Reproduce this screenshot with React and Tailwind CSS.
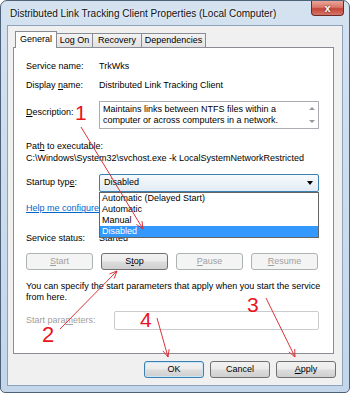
import React from 'react'

const btnBase =
  'h-[17px] rounded-[3px] border flex items-center justify-center leading-none'
const btnOn =
  'border-[#707070] text-black bg-[linear-gradient(#f2f2f2_0%,#ebebeb_48%,#dddddd_52%,#cfcfcf_100%)]'
const btnOff = 'border-[#adb2b5] text-[#a0a0a0] bg-[#f4f4f4]'

function U({ children }) {
  return <span className="underline underline-offset-[1px]">{children}</span>
}

function Arrow({ x1, y1, x2, y2 }) {
  const a = Math.atan2(y2 - y1, x2 - x1)
  const l = 8
  const s = 0.42
  const p1 = `${x2 - l * Math.cos(a - s)},${y2 - l * Math.sin(a - s)}`
  const p2 = `${x2 - l * Math.cos(a + s)},${y2 - l * Math.sin(a + s)}`
  return (
    <g stroke="#d9343a" strokeWidth="1" fill="none">
      <line x1={x1} y1={y1} x2={x2} y2={y2} />
      <polyline points={`${p1} ${x2},${y2} ${p2}`} />
    </g>
  )
}

function Tab({ active, children, w }) {
  if (active) {
    return (
      <div
        className={`${w} h-[17px] bg-white border border-b-0 border-[#898c95] flex items-center justify-center relative z-10`}
      >
        {children}
      </div>
    )
  }
  return (
    <div
      className={`${w} h-[14px] mb-[1px] -ml-[1px] border border-b-0 border-[#898c95] bg-linear-to-b from-[#f3f3f3] to-[#e2e2e2] flex items-center justify-center`}
    >
      {children}
    </div>
  )
}

export default function App() {
  return (
    <div className="w-[350px] h-[395px] bg-white relative font-['Liberation_Sans',Arial,sans-serif] text-[9px] text-black select-none overflow-hidden">
      {/* Window frame */}
      <div className="w-[350px] h-[393px] rounded-t-[7px] rounded-b-[5px] border border-[#4d6178] bg-linear-to-b from-[#d4e2f0] to-[#c3d6ea] flex flex-col">
        {/* Title bar */}
        <div className="h-[24px] flex items-start justify-between">
          <div className="h-[24px] pl-[9px] flex items-center whitespace-nowrap text-[10px] text-[#111] [text-shadow:0_0_3px_#ffffff]">
            Distributed Link Tracking Client Properties (Local Computer)
          </div>
          <div className="mr-[5px] w-[33px] h-[15px] rounded-b-[4px] border border-t-0 border-[#6b2b25] bg-[linear-gradient(#eba598_0%,#d9776a_45%,#c4463a_55%,#d6766a_100%)] flex items-center justify-center">
            <span className="text-white text-[11px] font-bold leading-none [text-shadow:0_0_2px_#5a1a14]">
              x
            </span>
          </div>
        </div>

        {/* Dialog face */}
        <div className="mx-[6px] mb-[6px] flex-1 border border-[#8ea3bb] bg-[#f0f0f0] flex flex-col">
          {/* Tabs */}
          <div className="mt-[5px] ml-[7px] h-[17px] -mb-[1px] flex items-end">
            <Tab active w="w-[42px]">General</Tab>
            <Tab w="w-[37px]">Log On</Tab>
            <Tab w="w-[50px]">Recovery</Tab>
            <Tab w="w-[65px]">Dependencies</Tab>
          </div>

          {/* Panel */}
          <div className="ml-[5px] w-[321px] h-[307px] bg-white border border-[#898c95] pl-[12px] flex flex-col">
            <div className="mt-[12px] h-[14px] flex items-center">
              <div className="w-[73px]">Service name:</div>
              <div>TrkWks</div>
            </div>
            <div className="mt-[5px] h-[14px] flex items-center">
              <div className="w-[73px]">
                Display <U>n</U>ame:
              </div>
              <div>Distributed Link Tracking Client</div>
            </div>
            <div className="mt-[8px] flex">
              <div className="w-[73px] pt-[4px] leading-[14px]">
                <U>D</U>escription:
              </div>
              <div className="w-[220px] h-[28px] border border-[#abadb3] flex">
                <div className="flex-1 pl-[3px] pt-[2px] leading-[11px]">
                  Maintains links between NTFS files within a computer or
                  across computers in a network.
                </div>
                <div className="w-[13px] flex flex-col items-center justify-between py-[5px]">
                  <div className="w-0 h-0 border-l-[3px] border-r-[3px] border-b-[3px] border-l-transparent border-r-transparent border-b-[#9a9a9a]" />
                  <div className="w-0 h-0 border-l-[3px] border-r-[3px] border-t-[3px] border-l-transparent border-r-transparent border-t-[#9a9a9a]" />
                </div>
              </div>
            </div>
            <div className="mt-[11px] h-[12px] leading-[12px]">
              Pat<U>h</U> to executable:
            </div>
            <div className="h-[12px] leading-[12px]">
              C:\Windows\System32\svchost.exe -k LocalSystemNetworkRestricted
            </div>
            <div className="mt-[10px] h-[18px] flex items-center">
              <div className="w-[73px]">
                Startup typ<U>e</U>:
              </div>
              <div className="relative w-[220px] h-[18px]">
                <div className="w-[220px] h-[18px] rounded-[2px] border border-[#3c7fb1] bg-linear-to-b from-[#f6f9fc] to-[#e2ecf5] flex items-center justify-between pl-[4px] pr-[5px]">
                  <span>Disabled</span>
                  <div className="w-0 h-0 border-l-[3.5px] border-r-[3.5px] border-t-[4px] border-l-transparent border-r-transparent border-t-black" />
                </div>
                {/* Open drop-down list */}
                <div className="absolute left-0 top-[18px] w-[220px] border border-[#646464] bg-white z-10 flex flex-col">
                  <div className="h-[11px] pl-[2px] flex items-center">
                    Automatic (Delayed Start)
                  </div>
                  <div className="h-[11px] pl-[2px] flex items-center">
                    Automatic
                  </div>
                  <div className="h-[11px] pl-[2px] flex items-center">
                    Manual
                  </div>
                  <div className="h-[11px] pl-[2px] flex items-center bg-[#3399ff] text-white">
                    Disabled
                  </div>
                </div>
              </div>
            </div>
            <div className="mt-[10px] h-[14px] flex items-center">
              <span className="text-[#0066cc] underline">
                Help me configure service recovery options.
              </span>
            </div>
            <div className="mt-[16px] h-[14px] flex items-center">
              <div className="w-[73px]">Service status:</div>
              <div>Started</div>
            </div>
            <div className="mt-[7px] flex gap-[8px]">
              <div className={`${btnBase} ${btnOff} w-[67px]`}>
                <span>
                  <U>S</U>tart
                </span>
              </div>
              <div className={`${btnBase} ${btnOn} w-[67px]`}>
                <span>
                  S<U>t</U>op
                </span>
              </div>
              <div className={`${btnBase} ${btnOff} w-[67px]`}>
                <span>
                  <U>P</U>ause
                </span>
              </div>
              <div className={`${btnBase} ${btnOff} w-[67px]`}>
                <span>
                  <U>R</U>esume
                </span>
              </div>
            </div>
            <div className="mt-[11px] leading-[11px]">
              You can specify the start parameters that apply when you start the
              service
              <br />
              from here.
            </div>
            <div className="mt-[8px] h-[19px] flex items-center">
              <div className="w-[88px] text-[#a0a0a0]">
                Start para<U>m</U>eters:
              </div>
              <div className="w-[205px] h-[19px] border border-[#c9cccf] rounded-[2px] bg-white" />
            </div>
          </div>

          {/* Dialog buttons */}
          <div className="mt-[7px] pr-[6px] flex justify-end gap-[6px]">
            <div
              className={`${btnBase} w-[60px] border-[#3c7fb1] text-black shadow-[inset_0_0_0_1px_#c7e7f8] bg-[linear-gradient(#f2f2f2_0%,#ebebeb_48%,#dddddd_52%,#cfcfcf_100%)]`}
            >
              OK
            </div>
            <div className={`${btnBase} ${btnOn} w-[60px]`}>Cancel</div>
            <div className={`${btnBase} ${btnOn} w-[60px]`}>
              <span>
                <U>A</U>pply
              </span>
            </div>
          </div>
        </div>
      </div>

      {/* Red annotations */}
      <svg
        className="absolute left-0 top-0 z-20 pointer-events-none"
        width="350"
        height="395"
      >
        <Arrow x1={81} y1={127} x2={143} y2={229} />
        <Arrow x1={60} y1={329} x2={117} y2={271} />
        <Arrow x1={266} y1={298} x2={295} y2={357} />
        <Arrow x1={157} y1={318} x2={168} y2={357} />
      </svg>
      <span className="absolute z-20 left-[75px] top-[102px] text-[21px] leading-none text-[#e8161c]">
        1
      </span>
      <span className="absolute z-20 left-[42px] top-[324px] text-[22px] leading-none text-[#e8161c]">
        2
      </span>
      <span className="absolute z-20 left-[247px] top-[294px] text-[21px] leading-none text-[#e8161c]">
        3
      </span>
      <span className="absolute z-20 left-[140px] top-[309px] text-[21px] leading-none text-[#e8161c]">
        4
      </span>
    </div>
  )
}
